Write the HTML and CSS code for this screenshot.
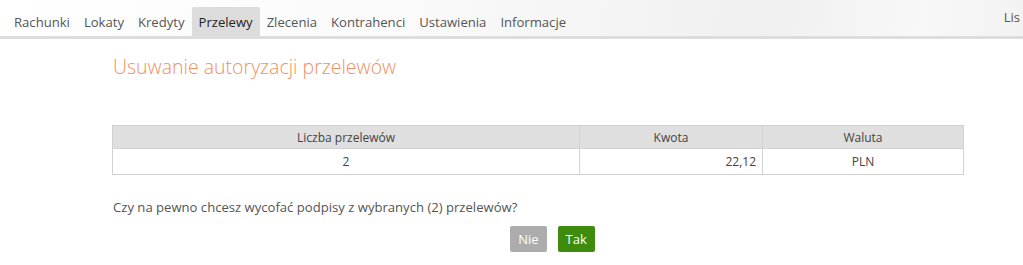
FILE: index.html
```html
<!DOCTYPE html>
<html lang="pl">
<head>
    <meta charset="UTF-8">
    <title>Przelewy</title>
    <link rel="stylesheet" href="styles.css">
</head>
<body>
<div class="topbar">
    <ul class="menu">
        <li>Rachunki</li>
        <li>Lokaty</li>
        <li>Kredyty</li>
        <li class="active">Przelewy</li>
        <li>Zlecenia</li>
        <li>Kontrahenci</li>
        <li>Ustawienia</li>
        <li>Informacje</li>
    </ul>
    <div class="user">Lis</div>
</div>

<div class="content">
    <h1>Usuwanie autoryzacji przelewów</h1>

    <table class="summary">
        <thead>
        <tr>
            <th class="col-count">Liczba przelewów</th>
            <th class="col-amount">Kwota</th>
            <th class="col-currency">Waluta</th>
        </tr>
        </thead>
        <tbody>
        <tr>
            <td class="center">2</td>
            <td class="right">22,12</td>
            <td class="center">PLN</td>
        </tr>
        </tbody>
    </table>

    <p class="question">Czy na pewno chcesz wycofać podpisy z wybranych (2) przelewów?</p>

    <div class="buttons">
        <button class="btn btn-no">Nie</button>
        <button class="btn btn-yes">Tak</button>
    </div>
</div>
</body>
</html>
```

FILE: styles.css
```css
body {
    margin: 0;
    font-family: "Open Sans", "Noto Sans", sans-serif;
    color: #444;
    background: #fff;
    overflow: hidden;
}

.topbar {
    display: flex;
    justify-content: space-between;
    height: 36px;
    background: linear-gradient(100deg, #fff 0%, #fafafa 40%, #f0f0f0 75%, #f8f8f8 90%, #f2f2f2 100%);
    border-bottom: 3px solid #ddd;
}
.menu {
    display: flex;
    list-style: none;
    margin: 0;
    padding: 7px 0 0 7px;
}
.menu li {
    padding: 6px 7px 0;
    font-size: 13.1px;
    color: #555;
}
.menu li.active {
    background: #dcdcdc;
    color: #222;
    border-radius: 2px 2px 0 0;
}
.user {
    padding: 8px 3px 0 0;
    font-size: 13px;
    color: #555;
}

.content {
    width: 881px;
    padding-left: 112px;
}
h1 {
    margin: 14px 0 0 1px;
    font-size: 19.5px;
    font-weight: 300;
    color: #f0915f;
}

.summary {
    width: 852px;
    margin-top: 45px;
    border-collapse: collapse;
    font-size: 12px;
}
.summary th, .summary td {
    border: 1px solid #d2d2d2;
    font-weight: 400;
}
.summary th {
    background: #dfdfdf;
    height: 22px;
    padding: 0;
}
.summary td {
    height: 25px;
    padding: 0 6px;
}
.col-count { width: 466px; }
.col-amount { width: 182px; }
.center { text-align: center; }
.right { text-align: right; }

.question {
    margin: 23px 0 0 1px;
    font-size: 13.1px;
    color: #555;
}

.buttons {
    display: flex;
    justify-content: center;
    gap: 11px;
    margin-top: 10px;
}
.btn {
    height: 26px;
    padding: 0 8px;
    border: 0;
    border-radius: 2px;
    font-family: inherit;
    font-size: 13px;
    color: #fff;
}
.btn-no { background: #acacac; }
.btn-yes { background: #3d8c0e; }
```
